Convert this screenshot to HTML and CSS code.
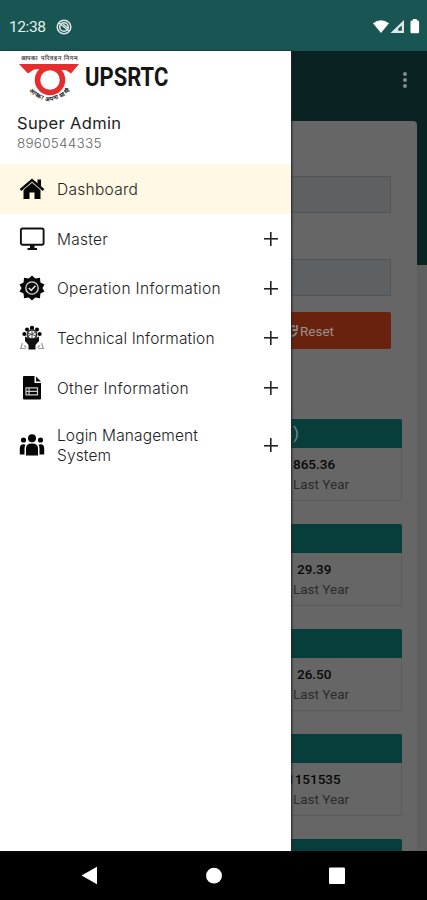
FILE: index.html
```html
<!DOCTYPE html>
<html lang="en">
<head>
<meta charset="utf-8">
<title>UPSRTC</title>
<link rel="stylesheet" href="styles.css">
</head>
<body>
<div class="phone">
  <header class="status">
    <span class="clock">12:38</span>
    <svg class="dnd" viewBox="0 0 16 16"><circle cx="8" cy="8" r="6.8" fill="none" stroke="#dfe9e8" stroke-width="1.5"/><circle cx="8" cy="8" r="4.3" fill="none" stroke="#dfe9e8" stroke-width="1.6"/><path d="M3 4l10 8M7 5l5 4" stroke="#dfe9e8" stroke-width="1.4"/></svg>
    <svg class="signals" viewBox="0 0 48 16"><path d="M0 4.2Q8 -1.8 16 4.2L8 14z" fill="#fff"/><path d="M31 1v13H17.5z" fill="#dfe8e7"/><path d="M28.8 6.5v5.3h-3.6V9.5z" fill="#185553"/><path d="M37.5 2.8q0-1.3 1.3-1.3h1V0h4v1.500h1q1.300 0 1.300 1.300v10.200q0 1.300-1.300 1.300h-6q-1.300 0-1.300-1.300z" fill="#fff"/></svg>
  </header>
  <div class="main">
    <nav class="drawer">
      <div class="brand">
        <svg class="logo" viewBox="0 0 62 52">
          <defs><path id="arc" d="M10 39Q31 61 54 38"/></defs>
          <text x="31" y="9" text-anchor="middle" textLength="57" class="motto">आपका परिवहन निगम</text>
          <path d="M1 13H61L53 22.500L47 18.500H16L10 22.500z" fill="#e52d30"/>
          <path d="M17 18.500H25L20 24z" fill="#fff"/>
          <circle cx="32" cy="29" r="12.500" fill="#fff" stroke="#e52d30" stroke-width="5.500"/>
          <path d="M29 17.300h25" stroke="#e52d30" stroke-width="3.500"/>
          <text class="motto arc"><textPath href="#arc" startOffset="1" textLength="48">आपका अपना साथी</textPath></text>
        </svg>
        <span class="brand-name">UPSRTC</span>
      </div>
      <div class="user"><div class="user-name">Super Admin</div><div class="user-phone">8960544335</div></div>
      <a class="item active"><svg class="icon" viewBox="0 0 26 26"><path d="M1.500 14L13 4l11.500 10" fill="none" stroke="#050505" stroke-width="2.400"/><path d="M18.500 3.500h3.500v7l-3.500-3zM4.500 14L13 6.800 21.500 14v9h-6v-6.500h-5V23h-6z" fill="#050505"/></svg><span class="label mid">Dashboard</span></a>
      <a class="item"><svg class="icon" viewBox="0 0 26 26"><rect x="1.900" y="2.500" width="22.700" height="16.300" rx="1.800" fill="none" stroke="#111" stroke-width="1.900"/><path d="M11 19h4.500v3h2.500v2H8.500v-2H11z" fill="#111"/></svg><span class="label mid">Master</span><i class="plus"></i></a>
      <a class="item"><svg class="icon" viewBox="0 0 26 26"><path d="M13 .5l3.300 3 4.700-.8.400 4.700 4.100 2-2 3.600 2 3.600-4.100 2-.4 4.700-4.700-.8-3.300 3-3.300-3-4.700.8-.4-4.700-4.100-2 2-3.600-2-3.600 4.100-2 .4-4.700 4.700.8z" fill="#080808"/><circle cx="13" cy="13" r="6.200" fill="none" stroke="#ddd" stroke-width="1.300"/><path d="M9.800 13l2.400 2.300 4.300-4.600" fill="none" stroke="#ddd" stroke-width="1.600"/></svg><span class="label wide">Operation Information</span><i class="plus"></i></a>
      <a class="item"><svg class="icon" viewBox="0 0 26 26"><circle cx="5.300" cy="9" r="2" /><circle cx="8" cy="4.500" r="2"/><circle cx="13" cy="3" r="2.200"/><circle cx="18" cy="4.500" r="2"/><circle cx="20.700" cy="9" r="2"/><circle cx="13" cy="9.500" r="4.600" fill="none" stroke="#333" stroke-width="1.800"/><path d="M13 5v9M8.500 8l9 3M9 11l8-4" stroke="#555"/><path d="M6 11.500l4 2h6l4-2v4.500l-3.500 4v4.500h-7V20L6 16z" fill="#111"/><path d="M3.500 18l-1.800 5.500h5M22.500 18l1.800 5.500h-5M5 20.500l2.500 2M21 20.500l-2.500 2" fill="none" stroke="#999" stroke-width="1.200"/></svg><span class="label">Technical Information</span><i class="plus"></i></a>
      <a class="item"><svg class="icon" viewBox="0 0 26 26"><path d="M5 1h10.500v7H22v15.500q0 1-1 1H5q-1 0-1-1V2q0-1 1-1z" fill="#050505"/><path d="M17 1.500L22 6.500h-5z" fill="#111"/><path d="M7 12.800h11.500v7H7zM7 16.300h11.500M10 12.800v7" fill="none" stroke="#ccc" stroke-width="1.200"/></svg><span class="label wide">Other Information</span><i class="plus"></i></a>
      <a class="item tall"><svg class="icon" viewBox="0 0 26 26"><circle cx="13" cy="6.300" r="4" fill="#050505"/><circle cx="4.500" cy="8" r="2.600" fill="#050505"/><circle cx="21.500" cy="8" r="2.600" fill="#050505"/><path d="M7 23.500v-7q0-5 6-5t6 5v7zM5.500 22.500H.8v-6q0-4.300 3.700-4.300 1.300 0 2 .6-1 1.700-1 4zM20.500 22.500h4.700v-6q0-4.300-3.700-4.300-1.300 0-2 .6 1 1.700 1 4z" fill="#050505"/></svg><span class="label">Login Management<br>System</span><i class="plus"></i></a>
    </nav>
    <section class="page">
      <div class="toolbar"><svg class="more" viewBox="0 0 4 18"><circle cx="2" cy="3" r="2"/><circle cx="2" cy="9" r="2"/><circle cx="2" cy="15" r="2"/></svg></div>
      <div class="sheet">
        <div class="field"></div>
        <div class="field second"></div>
        <div class="reset"><svg class="reload" viewBox="0 0 7 14"><path d="M0 3q2-2 4 0M6 1v5H1.500M5.500 8q-1 4-5.500 4" fill="none" stroke="#888" stroke-width="1.800"/></svg>Reset</div>
        <div class="report first"><div class="head">)</div><div class="value v1">865.36</div><div class="caption">Last Year</div></div>
        <div class="report"><div class="head"></div><div class="value">29.39</div><div class="caption">Last Year</div></div>
        <div class="report"><div class="head"></div><div class="value">26.50</div><div class="caption">Last Year</div></div>
        <div class="report"><div class="head"></div><div class="value v4">1151535</div><div class="caption">Last Year</div></div>
        <div class="report"><div class="head"></div></div>
      </div>
    </section>
  </div>
  <footer class="navbar">
    <svg viewBox="0 0 427 49"><path d="M81.500 24.500L97 15.700v17.600z" fill="#fff"/><circle cx="214" cy="24.700" r="7.900" fill="#fff"/><rect x="329" y="16.500" width="16" height="16.500" rx="1" fill="#fff"/></svg>
  </footer>
</div>
</body>
</html>
```

FILE: styles.css
```css
* { box-sizing: border-box; }
body { margin: 0; font-family: Roboto, sans-serif; }
.phone { width: 427px; height: 900px; display: flex; flex-direction: column; overflow: hidden; background: #000; }
.status { height: 51px; flex: none; background: #185553; display: flex; align-items: center; padding: 2px 6px 0 9px; }
.clock { color: #e6efee; font-size: 15.5px; width: 47px; letter-spacing: -.4px; }
.dnd { width: 16px; height: 16px; }
.signals { width: 48px; height: 16px; margin-left: auto; }
.main { height: 800px; flex: none; display: flex; }
.drawer { width: 291px; flex: none; background: #fff; box-shadow: 1px 0 2px #222; z-index: 1; font-family: Inter, sans-serif; }
.brand { height: 52px; display: flex; align-items: center; padding-left: 18px; }
.logo { width: 62px; height: 52px; }
.motto { font-size: 6px; font-weight: 700; fill: #444; }
.arc { fill: #222; }
.brand-name { font: 700 26px/52px Roboto, sans-serif; color: #151515; transform: scaleX(.845); transform-origin: left; margin-left: 5px; }
.user { height: 61px; padding: 10px 0 0 17px; }
.user-name { font-size: 16.5px; line-height: 20px; color: #222; letter-spacing: .35px; }
.user-phone { font-size: 13.5px; line-height: 20px; color: #666; font-weight: 300; letter-spacing: .25px; }
.item { height: 49.8px; display: flex; align-items: center; padding: 0 13px 0 19px; }
.active { background: #fff8e4; }
.tall { height: 65px; }
.icon { width: 26px; height: 26px; flex: none; }
.label { margin-left: 12px; padding-top: 2px; font-size: 15.5px; font-weight: 300; line-height: 20px; letter-spacing: .12px; color: #222; white-space: nowrap; }
.mid { letter-spacing: .28px; }
.wide { letter-spacing: .35px; }
.plus { width: 14px; height: 14px; margin-left: auto; background: linear-gradient(#222, #222) center / 14px 1.6px no-repeat, linear-gradient(#222, #222) center / 1.6px 14px no-repeat; }
.page { flex: 1; overflow: hidden; background: linear-gradient(#0a2221 214px, #5f5f5f 214px); }
.toolbar { height: 70px; display: flex; justify-content: flex-end; padding: 20px 20px 0 0; }
.more { width: 4px; height: 18px; fill: #858c8c; }
.sheet { width: 126px; height: 730px; overflow: hidden; background: #666; border-radius: 0 4px 0 0; padding-top: 55px; }
.field { width: 100px; height: 37px; background: #5d6163; border: 1px solid #525455; border-left: 0; }
.second { margin-top: 46px; }
.reset { width: 100px; height: 37px; margin-top: 16px; background: #69220e; border-radius: 0 2px 2px 0; display: flex; align-items: center; color: #9a908d; font-size: 13.5px; }
.reload { width: 7px; height: 14px; margin-right: 2px; }
.report { width: 111px; height: 82px; margin-bottom: 23px; border: 1px solid #5b5b5b; border-width: 0 1px 1px 0; border-radius: 0 2px 2px 0; }
.first { margin-top: 70px; }
.head { height: 29px; background: #073e3c; border-radius: 0 2px 0 0; color: #6f8a88; font-size: 17px; line-height: 29px; padding-left: 2px; margin-right: -1px; }
.value { font-size: 13.5px; font-weight: 500; line-height: 20px; color: #080808; margin-top: 6px; padding-left: 6px; }
.v1 { padding-left: 2px; }
.v4 { padding-left: 0; margin-left: -4px; }
.caption { font-size: 13.5px; line-height: 20px; color: #2b2b2b; padding-left: 2px; }
.navbar { height: 49px; flex: none; background: #000; }
.navbar svg { display: block; width: 427px; height: 49px; }
```
